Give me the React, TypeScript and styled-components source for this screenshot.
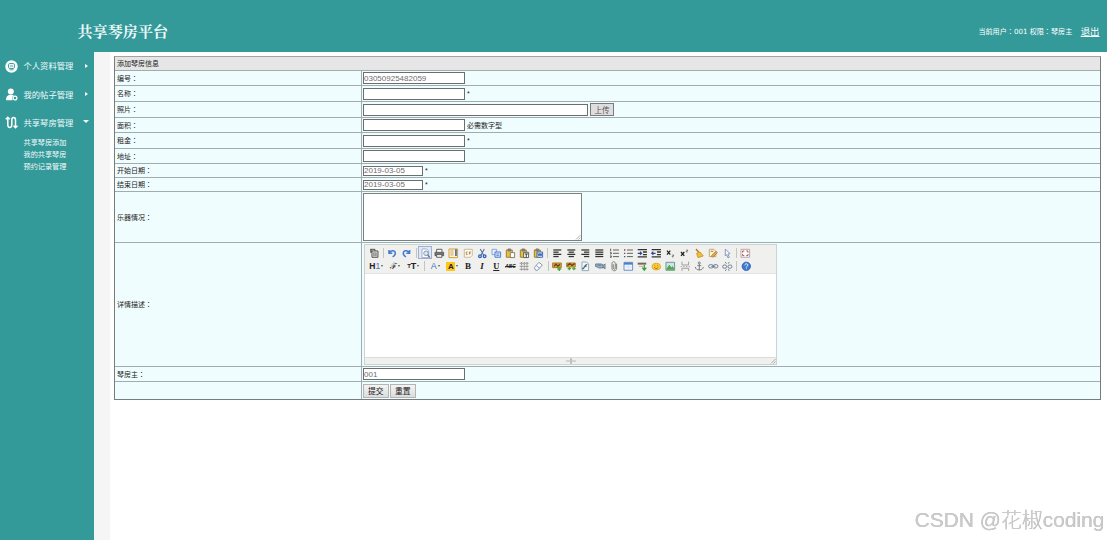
import React from 'react';
import styled, { createGlobalStyle } from 'styled-components';

const GlobalStyle = createGlobalStyle`
  * { box-sizing: border-box; }
  body {
    margin: 0;
    background: #fff;
    font-family: "Liberation Sans", "Noto Sans CJK SC", sans-serif;
    color: #222;
    overflow: hidden;
  }
`;

const Page = styled.div`
  height: 540px;
  display: flex;
  flex-direction: column;
`;

const Header = styled.header`
  height: 52px;
  flex: none;
  background: #339999;
  color: #fff;
  display: flex;
  align-items: center;
  justify-content: space-between;
  padding: 11px 7.5px 0 77.5px;
`;

const Title = styled.h1`
  margin: 0;
  font: 700 15.1px/20px "Liberation Serif", "Noto Serif CJK SC", "Noto Sans CJK SC", serif;
  color: #eef8f8;
`;

const UserInfo = styled.div`
  display: flex;
  align-items: center;
  font-size: 7.1px;
  line-height: 12px;
  white-space: pre;
`;

const UserText = styled.span`
  font-family: "DejaVu Sans", "Noto Sans CJK SC", sans-serif;
`;

const WideColon = styled.span`
  font-family: "Noto Sans CJK TC", sans-serif;
`;

const Logout = styled.a`
  margin-left: 8.5px;
  font-size: 9.4px;
  color: #fff;
  text-decoration: underline;
  text-underline-offset: 1px;
  text-decoration-thickness: 0.6px;
`;

const Body = styled.div`
  flex: 1;
  display: flex;
  min-height: 0;
`;

const Sidebar = styled.nav`
  width: 94px;
  background: #339999;
  color: #f2fafa;
`;

const MenuItem = styled.div`
  height: 28.3px;
  display: flex;
  align-items: center;
  padding: 0 5px 0 5px;
  font-size: 8.3px;
`;

const MenuLabel = styled.span`
  flex: 1;
  margin-left: 5.5px;
  white-space: nowrap;
  position: relative;
  top: -0.7px;
`;

const SubMenu = styled.div`
  padding: 1.5px 0 0 23.5px;
  font-size: 7.15px;
  line-height: 11.8px;
`;

const SubItem = styled.div``;

const Caret = styled.span<{ $open?: boolean }>`
  width: 0;
  height: 0;
  border-style: solid;
  border-color: transparent;
  ${p => p.$open
    ? 'border-width: 3px 3px 0 3px; border-top-color: #fff; position: relative; top: -1px;'
    : 'border-width: 2.7px 0 2.7px 3px; border-left-color: #fff; margin-right: 1px;'}
`;

const Gutter = styled.div`
  width: 16px;
  background: #f5f5f5;
`;

const Main = styled.main`
  flex: 1;
  padding: 4px 6px 0 4px;
`;

const Table = styled.div`
  border: 1px solid #777d7d;
  border-top-color: #a5a39f;
  background: #f0fdff;
  font-size: 7px;
`;

const TableHead = styled.div`
  height: 14px;
  line-height: 13px;
  padding-left: 2px;
  background: #e6e6e6;
  border-bottom: 1px solid #a3abab;
`;

const Row = styled.div<{ $h: number; $last?: boolean }>`
  height: ${p => p.$h}px;
  display: grid;
  grid-template-columns: 247px 1fr;
  border-bottom: ${p => (p.$last ? 'none' : '1px solid #a0acad')};
`;

const LabelCell = styled.div`
  display: flex;
  align-items: center;
  padding: 0 0 1px 2px;
  border-right: 1px solid #a0acad;
`;

const FieldCell = styled.div`
  display: flex;
  align-items: center;
  padding-left: 1px;
  min-height: 0;
`;

const Input = styled.input<{ $w: number; $h?: number }>`
  width: ${p => p.$w}px;
  height: ${p => p.$h ?? 12}px;
  margin: 0;
  padding: 0;
  border: 1px solid #6a6e6e;
  border-radius: 0;
  background: #fff;
  color: #6e6e6e;
  font: 8px/9px "Liberation Sans", sans-serif;
  outline: none;
`;

const Note = styled.span`
  margin-left: 2px;
`;

const UploadButton = styled.button`
  width: 24px;
  height: 13px;
  margin: 0 0 0 2px;
  padding: 0;
  border: 1px solid #7a7a7a;
  background: #dedede;
  color: #555;
  font: 7.6px/10px "Noto Sans CJK SC", sans-serif;
`;

const FormButton = styled.button`
  width: 25.5px;
  height: 14px;
  margin: 0 1.5px 0 0;
  padding: 0;
  border: 1px solid #b4b4b4;
  background: linear-gradient(#f4f4f4, #dcdcdc);
  color: #222;
  font: 7.8px/11px "Noto Sans CJK SC", sans-serif;
`;

const TextArea = styled.div`
  width: 219px;
  height: 48px;
  border: 1px solid #7b8080;
  background: #fff;
  display: flex;
  align-items: flex-end;
  justify-content: flex-end;
`;

const Editor = styled.div`
  width: 413px;
  height: 121px;
  margin-left: 1px;
  border: 1px solid #cfd2d2;
  background: #fff;
  display: flex;
  flex-direction: column;
`;

const Toolbar = styled.div`
  height: 29px;
  padding: 1px 2px;
  background: #f0f0ee;
  border-bottom: 1px solid #e4e4e2;
`;

const ToolRow = styled.div`
  height: 13.6px;
  display: flex;
  align-items: center;
`;

const Tool = styled.span<{ $w?: number; $active?: boolean }>`
  width: ${p => p.$w ?? 14.18}px;
  height: 13px;
  flex: none;
  display: flex;
  align-items: center;
  justify-content: center;
  ${p => p.$active && 'border: 1px solid #9cb0d6; background: #e2e9f5;'}
`;

const Separator = styled.span`
  width: 1px;
  height: 10px;
  flex: none;
  margin: 0 1.68px;
  background: #c4c4c2;
`;

const EditArea = styled.div`
  flex: 1;
`;

const StatusBar = styled.div`
  height: 7px;
  background: #f0f0ee;
  border-top: 1px solid #dcdcda;
  display: grid;
  grid-template-columns: 1fr auto 1fr;
  align-items: center;
`;

const GripEnd = styled.span`
  justify-self: end;
  display: flex;
`;

const Watermark = styled.div`
  position: fixed;
  right: 3px;
  bottom: 6px;
  font: 300 20.9px/28px "Liberation Sans", "Noto Sans CJK SC", sans-serif;
  color: #cbcbcb;
  text-shadow: 0.4px 0.4px 0 #b4b4b4;
  white-space: nowrap;
`;

const Svg = styled.svg`
  display: block;
  flex: none;
  overflow: visible;
`;

const Icon = ({ children, size = 11 }: { children: React.ReactNode; size?: number }) => (
  <Svg width={size} height={size} viewBox="0 0 16 16" fill="none" stroke="#555" strokeWidth="1.4">
    {children}
  </Svg>
);

const Glyph = styled.span<{ $color?: string; $bg?: string; $size?: number; $serif?: boolean; $italic?: boolean; $bold?: boolean; $line?: string }>`
  font: ${p => (p.$italic ? 'italic' : 'normal')} ${p => (p.$bold ? 700 : 400)} ${p => p.$size ?? 8}px/9px
    ${p => (p.$serif ? '"Liberation Serif", serif' : '"Liberation Sans", sans-serif')};
  color: ${p => p.$color ?? '#222'};
  background: ${p => p.$bg ?? 'transparent'};
  padding: ${p => (p.$bg ? '0 1.5px' : '0')};
  text-decoration: ${p => p.$line ?? 'none'};
  white-space: nowrap;
`;

const SmallCaret = styled.span`
  margin-left: 1px;
  border: solid transparent;
  border-width: 2px 1.8px 0;
  border-top-color: #555;
`;

const page = 'M3 1.5h7l3 3v10H3z';
const clipboard = (
  <>
    <path d="M2 3h9v11H2z" fill="#e8bf45" stroke="#a07a20" />
    <path d="M4.5 1.5h4v3h-4z" fill="#888" stroke="#777" />
  </>
);

const alignLines = (rows: [number, number][]) => rows.map(([a, b], i) => (
  <path key={i} d={`M${a} ${3 + i * 3.3}H${b}`} stroke="#333" strokeWidth="1.9" />
));

const icons: Record<string, React.ReactNode> = {
  source: <><path d="M4.500 4.500h9v9.500h-9zM2 2h7v2.500M7.500 6.500v6M10.500 6.500v6" stroke="#444" /><path d="M3 2v5" stroke="#333" strokeWidth="1.800" /></>,
  undo: <path d="M3 3v5h5M3.5 7C7 2 13 4 12.5 8.5c-.3 2.5-2 4-4 5" stroke="#4779cf" strokeWidth="2.3" />,
  redo: <path d="M13 3v5H8M12.5 7C9 2 3 4 3.5 8.5c.3 2.5 2 4 4 5" stroke="#4779cf" strokeWidth="2.3" />,
  preview: <><path d={page} fill="#fff" stroke="#9babc2" /><circle cx="9" cy="8" r="3.4" fill="#dbe8f8" stroke="#8292aa" /><path d="m11.5 10.500 3.500 4" stroke="#777" strokeWidth="2" /></>,
  print: <><path d="M4 6V2h8v4" fill="#fff" /><path d="M1.500 6.500h13v5h-13z" fill="#777" /><path d="M4 10h8v4H4z" fill="#fff" /></>,
  template: <><path d="M1.500 1.500h13v13h-13z" fill="#fff8d8" stroke="#cf9830" /><path d="M3.500 4.500h5M3.500 7.500h5M3.500 10.500h5" stroke="#c49b60" /><path d="M12 2v10" stroke="#3c69b4" strokeWidth="2.600" /></>,
  code: <><path d="M2 2h12v9l-3 3H2z" fill="#fffdf4" stroke="#c4b494" /><path d="M7 6H5v4h2M12 6H9.500v4M9.500 8h2" stroke="#aa7c42" /></>,
  cut: <><path d="M5 1.500 10 11M11 1.500 6 11" stroke="#5a6f92" strokeWidth="1.600" /><circle cx="4.500" cy="12.500" r="2" stroke="#2c62c0" strokeWidth="2" /><circle cx="11.500" cy="12.500" r="2" stroke="#2c62c0" strokeWidth="2" /></>,
  copy: <><path d="M1.500 2h7v8h-7z" fill="#e4efff" stroke="#83a2d2" /><path d="M6 6h8.500v8H6z" fill="#d2e4ff" stroke="#4b79c2" /><path d="M8 9h4.500M8 11.500h4.500" stroke="#648bd0" /></>,
  paste: <>{clipboard}<path d="M8 7h6.500v7.500H8z" fill="#fff" stroke="#817b65" /></>,
  pasteText: <>{clipboard}<path d="M7 6.500h7.500v8H7z" fill="#fff" stroke="#555" /><path d="M8.500 9h5M11 9v5" stroke="#333" /></>,
  pasteWord: <>{clipboard}<path d="M6 6h8.500v8H6z" fill="#dfeaff" stroke="#3767af" /><path d="m7.500 8 1.500 4 1.500-4 1.500 4 1.300-4" stroke="#2759ac" /></>,
  left: alignLines([[2, 14], [2, 10], [2, 14], [2, 10]]),
  center: alignLines([[2, 14], [4, 12], [2, 14], [4, 12]]),
  right: alignLines([[2, 14], [6, 14], [2, 14], [6, 14]]),
  justify: alignLines([[2, 14], [2, 14], [2, 14], [2, 14]]),
  ol: <path d="M6 3h9M6 8h9M6 13h9M2.500 1v4M1.500 7h2v2h-2M1.500 12h2v2h-2" stroke="#555" />,
  ul: <><path d="M6 3h9M6 8h9M6 13h9" stroke="#555" /><path d="M1.500 3h2M1.500 8h2M1.500 13h2" stroke="#555" strokeWidth="2" /></>,
  indent: <><path d="M1 2.500h14M9 6h6M9 10h6M1 13.500h14" stroke="#333" strokeWidth="2" /><path d="M1 8h6M4.500 5.500 7 8l-2.500 2.500" stroke="#2b4f94" strokeWidth="1.800" /></>,
  outdent: <><path d="M1 2.500h14M9 6h6M9 10h6M1 13.500h14" stroke="#333" strokeWidth="2" /><path d="M7 8H1M3.500 5.500 1 8l2.500 2.500" stroke="#2b4f94" strokeWidth="1.800" /></>,
  sub: <><path d="m3 4 5 6M8 4l-5 6" stroke="#222" strokeWidth="1.900" /><path d="M11 10.500h2v1.500h-2v1.500h2" stroke="#444" strokeWidth=".9" /></>,
  sup: <><path d="m3 6 5 6M8 6l-5 6" stroke="#222" strokeWidth="1.900" /><path d="M11 3h2v1.500h-2V6h2" stroke="#444" strokeWidth=".9" /></>,
  brush: <><path d="m3 1.500 5 6" stroke="#b87924" strokeWidth="2" /><path d="m4 8 5-2 5 6-8 2.500z" fill="#f4bd32" stroke="#cf9425" /></>,
  quick: <><path d="M2 2h7l3 3v8H2z" fill="#fff3cf" stroke="#c4a36a" /><path d="m5 12 7-7 2 2-7 7z" fill="#eeb04a" stroke="#a9783c" /><path d="M4 5h4" stroke="#777" /></>,
  select: <path d="m5 1.500 7 7-3 .5 2 5-2 .8-2-5L5 12z" fill="#f9fbff" stroke="#8094ba" />,
  full: <><path d="M1.500 2h13v12h-13z" fill="#fff" stroke="#b4a4a4" /><path d="M4 7V4.500h2.500M12 7V4.500H9.500M4 9v2.500h2.500M12 9v2.500H9.500" stroke="#a44" /></>,
  hr: <path d="M1 3.500h14M1 8h14M1 12.500h14M4 1.500v13M8 1.500v13M12 1.500v13" stroke="#777" strokeWidth="1.200" strokeDasharray="2 .7" />,
  eraser: <path d="m2 10 7-8 5 4-7 8H4zM5 7l5 4" fill="#fbfdff" stroke="#8090ac" />,
  image: <><path d="M1 3h13v7H1z" fill="#d8ab36" stroke="#a56f1f" /><path d="M3 8 6 5l3 3 3-3" stroke="#6b421a" strokeWidth="2" /><path d="M11 9v6M8 12h6" stroke="#4aa43a" strokeWidth="2.200" /></>,
  images: <><path d="M1 3h13v6H1z" fill="#e4b62f" stroke="#9c7c22" /><path d="M2 7 6 4l3 3 4-3" stroke="#7b3520" strokeWidth="2" /><path d="M5 9v5M2.500 11.500h5M12 9v5M9.500 11.500h5" stroke="#4aa43a" strokeWidth="1.900" /></>,
  flash: <><path d={page} fill="#f3f7fb" stroke="#90a5b4" /><path d="M11 5c-5 0-3 7-8 7M6 8h4" stroke="#447688" strokeWidth="2" /></>,
  media: <><path d="M1 4.500h8c4 0 5 6 1 6H6c-2 0-1-2-5-2z" fill="#9cb2cc" stroke="#607890" /><path d="m11 7 4-2v6l-4-2M4 6.500h5" stroke="#607890" strokeWidth="1.600" /></>,
  file: <path d="M11.500 4v7c0 5-7 5-7 0V4c0-4 5-4 5 0v7c0 2-3 2-3 0V5" stroke="#777" />,
  table: <><path d="M1.500 2h13v12h-13z" fill="#eef5ff" stroke="#668bc4" /><path d="M1.500 4h13" stroke="#4a7dcb" strokeWidth="3" /><path d="M2 9h12M8 6v8" stroke="#c7d7ed" strokeWidth=".8" /></>,
  line: <><path d="M1 4h13" stroke="#765" strokeWidth="3" /><path d="M3 8h6" stroke="#baa" /><path d="M11 6v7M8 10l3 4 3-4" stroke="#3d9f39" strokeWidth="2" /></>,
  smile: <><ellipse cx="8" cy="8.500" rx="6.300" ry="5" fill="#f9cd39" stroke="#e2a41f" /><path d="M5.500 7h1M9.500 7h1M5 9.500c2 2.500 4 2.500 6 0" stroke="#98691d" /></>,
  map: <><path d="M1.500 2h13v12h-13z" fill="#c9e4f5" stroke="#6a9378" /><path d="m2.500 12.500 4-6 3 4 2-2 2 4z" fill="#54a54d" stroke="#54a54d" /></>,
  pagebreak: <path d="M3 1v5h10V1M3 15v-4h10v4M1 8.500h2M5 8.500h2M9 8.500h2M13 8.500h2" stroke="#999" />,
  anchor: <><circle cx="8" cy="3" r="1.600" stroke="#777" /><path d="M8 4.500V14M5 7h6M2 9c0 6 12 6 12 0" stroke="#777" /></>,
  link: <><rect x="1" y="5.500" width="7" height="5" rx="2.500" stroke="#66788f" /><rect x="8" y="5.500" width="7" height="5" rx="2.500" stroke="#66788f" /><path d="M5 8h6" stroke="#66788f" /></>,
  unlink: <><rect x="1" y="6" width="6" height="5" rx="2.500" stroke="#66788f" /><rect x="9" y="6" width="6" height="5" rx="2.500" stroke="#66788f" /><path d="M5 1.500 6.500 4M11 1.500 9.500 4M5 15l1.500-2.500M11 15l-1.500-2.500" stroke="#66788f" /></>,
  about: <><circle cx="8" cy="8" r="6.300" fill="#3f78cf" stroke="#2f62b4" /><path d="M5.800 6.500c0-3 4.500-3 4.500-.3C10.300 8 8 8 8 9.800M8 11.300v1.200" stroke="#fff" /></>,
};

const topTools = ['source', '|', 'undo', 'redo', '|', 'preview', 'print', 'template', 'code', 'cut', 'copy', 'paste', 'pasteText', 'pasteWord', '|', 'left', 'center', 'right', 'justify', 'ol', 'ul', 'indent', 'outdent', 'sub', 'sup', 'brush', 'quick', 'select', '|', 'full'];
const bottomTools = ['hr', 'eraser', '|', 'image', 'images', 'flash', 'media', 'file', 'table', 'line', 'smile', 'map', 'pagebreak', 'anchor', 'link', 'unlink', '|', 'about'];

const renderTools = (names: string[]) => names.map((name, i) => (
  name === '|'
    ? <Separator key={i} />
    : <Tool key={i} $active={name === 'preview'}><Icon size={10.6}>{icons[name]}</Icon></Tool>
));

const Grip = () => (
  <Svg width="6" height="6" viewBox="0 0 6 6" stroke="#999" strokeWidth=".8">
    <path d="M1 5.500 5.500 1M3.500 5.500l2-2" />
  </Svg>
);

const RichEditor = () => (
  <Editor>
    <Toolbar>
      <ToolRow>{renderTools(topTools)}</ToolRow>
      <ToolRow>
        <Tool $w={18.5}><Glyph $size={8.500} $bold>H<Glyph $color="#4a74b8" $size={8.500}>1</Glyph></Glyph><SmallCaret /></Tool>
        <Tool $w={18.5}><Glyph $serif $size={8.500}>ℱ</Glyph><SmallCaret /></Tool>
        <Tool $w={18.5}><Glyph $size={6} $bold>T</Glyph><Glyph $size={9} $bold>T</Glyph><SmallCaret /></Tool>
        <Separator />
        <Tool $w={17}><Glyph $color="#3d70c8" $size={9}>A</Glyph><SmallCaret /></Tool>
        <Tool $w={17}><Glyph $bg="#ffc61a" $bold>A</Glyph><SmallCaret /></Tool>
        <Tool><Glyph $serif $bold $size={9}>B</Glyph></Tool>
        <Tool><Glyph $serif $bold $italic $size={9}>I</Glyph></Tool>
        <Tool><Glyph $serif $bold $size={8.500} $line="underline">U</Glyph></Tool>
        <Tool><Glyph $bold $italic $size={4.800} $line="line-through">ABC</Glyph></Tool>
        {renderTools(bottomTools)}
      </ToolRow>
    </Toolbar>
    <EditArea />
    <StatusBar>
      <span />
      <Svg width="10" height="6" viewBox="0 0 10 6" stroke="#aaa" strokeWidth=".8">
        <path d="M0 3h10M5 0v6M4 1.300h2M4 4.700h2" />
      </Svg>
      <GripEnd><Grip /></GripEnd>
    </StatusBar>
  </Editor>
);

type FieldRowProps = { label?: string; h: number; last?: boolean; children: React.ReactNode };
const FieldRow = ({ label, h, last, children }: FieldRowProps) => (
  <Row $h={h} $last={last}>
    <LabelCell>{label}{label && <WideColon>：</WideColon>}</LabelCell>
    <FieldCell>{children}</FieldCell>
  </Row>
);

export default function App() {
  return (
    <Page>
      <GlobalStyle />
      <Header>
        <Title>共享琴房平台</Title>
        <UserInfo>
          <UserText>当前用户<WideColon>：</WideColon>001 权限<WideColon>：</WideColon>琴房主</UserText>
          <Logout>退出</Logout>
        </UserInfo>
      </Header>
      <Body>
        <Sidebar>
          <MenuItem>
            <Svg width="13" height="13" viewBox="0 0 13 13">
              <circle cx="6.500" cy="6.500" r="6.200" fill="#fff" />
              <rect x="3.600" y="3.600" width="5.800" height="4.800" rx="1" fill="none" stroke="#339999" />
              <path d="M5 6h3M4.500 9.800h4" stroke="#339999" strokeWidth=".9" />
            </Svg>
            <MenuLabel>个人资料管理</MenuLabel>
            <Caret />
          </MenuItem>
          <MenuItem>
            <Svg width="13" height="13" viewBox="0 0 13 13">
              <circle cx="5.800" cy="3.400" r="3" fill="#fff" />
              <path d="M1 12.300c0-4 2-5.500 5-5.500 1.500 0 2.500.3 3 .8-2 .5-2.500 3-1.200 4.700z" fill="#fff" />
              <circle cx="10" cy="10" r="1.900" fill="none" stroke="#fff" strokeWidth="1.300" />
            </Svg>
            <MenuLabel>我的帖子管理</MenuLabel>
            <Caret />
          </MenuItem>
          <MenuItem>
            <Svg width="13" height="13" viewBox="0 0 13 13" fill="none" stroke="#fff" strokeWidth="1.500">
              <path d="M2.800 1.500v7.200c0 3.600 4 3.600 4 0V4c0-3.200 3.700-3.200 3.700 0v7.500M.8 3.300l2-2 2 2M8.500 9.800l2 2 2-2" />
            </Svg>
            <MenuLabel>共享琴房管理</MenuLabel>
            <Caret $open />
          </MenuItem>
          <SubMenu>
            <SubItem>共享琴房添加</SubItem>
            <SubItem>我的共享琴房</SubItem>
            <SubItem>预约记录管理</SubItem>
          </SubMenu>
        </Sidebar>
        <Gutter />
        <Main>
          <Table>
            <TableHead>添加琴房信息</TableHead>
            <FieldRow label="编号" h={15}><Input $w={102} defaultValue="03050925482059" /></FieldRow>
            <FieldRow label="名称" h={16}><Input $w={102} /><Note>*</Note></FieldRow>
            <FieldRow label="照片" h={16}><Input $w={225} /><UploadButton>上传</UploadButton></FieldRow>
            <FieldRow label="面积" h={15}><Input $w={102} /><Note>必需数字型</Note></FieldRow>
            <FieldRow label="租金" h={16}><Input $w={102} /><Note>*</Note></FieldRow>
            <FieldRow label="地址" h={15}><Input $w={102} /></FieldRow>
            <FieldRow label="开始日期" h={14}><Input $w={60} $h={10} defaultValue="2019-03-05" /><Note>*</Note></FieldRow>
            <FieldRow label="结束日期" h={14}><Input $w={60} $h={10} defaultValue="2019-03-05" /><Note>*</Note></FieldRow>
            <FieldRow label="乐器情况" h={51}><TextArea><Grip /></TextArea></FieldRow>
            <FieldRow label="详情描述" h={124}><RichEditor /></FieldRow>
            <FieldRow label="琴房主" h={15}><Input $w={102} defaultValue="001" /></FieldRow>
            <FieldRow h={17} last>
              <FormButton>提交</FormButton>
              <FormButton>重置</FormButton>
            </FieldRow>
          </Table>
        </Main>
      </Body>
      <Watermark>CSDN @花椒coding</Watermark>
    </Page>
  );
}
